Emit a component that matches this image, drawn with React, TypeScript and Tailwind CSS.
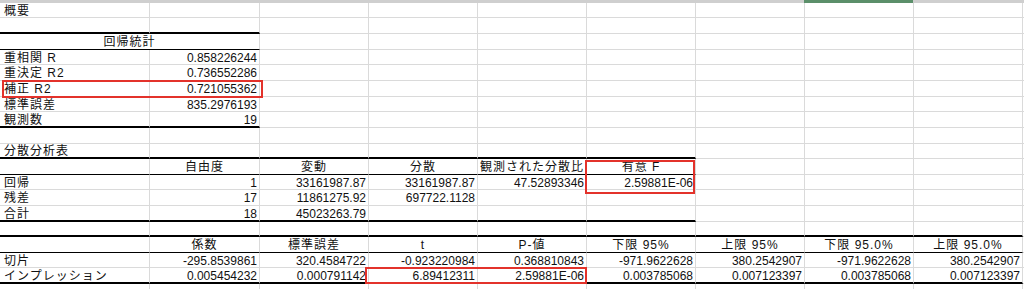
import React from "react";

type Line = "g" | "t" | "T";
type Align = "l" | "r" | "c";

interface RowSpec {
  h: 15 | 16;
  label?: string;
  vals?: string[];
  align?: Align;
  line?: { type: Line; n: number };
  merge2?: string;
}

const FONT = { fontFamily: '"Liberation Sans", "Noto Sans CJK JP", sans-serif' };

const rows: RowSpec[] = [
  { h: 15, label: "概要" },
  { h: 16, line: { type: "T", n: 2 } },
  { h: 16, merge2: "回帰統計", line: { type: "t", n: 2 } },
  { h: 15, label: "重相関 R", vals: ["0.858226244"] },
  { h: 16, label: "重決定 R2", vals: ["0.736552286"] },
  { h: 16, label: "補正 R2", vals: ["0.721055362"] },
  { h: 15, label: "標準誤差", vals: ["835.2976193"] },
  { h: 16, label: "観測数", vals: ["19"], line: { type: "T", n: 2 } },
  { h: 16 },
  { h: 15, label: "分散分析表", line: { type: "T", n: 6 } },
  {
    h: 16,
    vals: ["自由度", "変動", "分散", "観測された分散比", "有意 F"],
    align: "c",
    line: { type: "t", n: 6 },
  },
  { h: 15, label: "回帰", vals: ["1", "33161987.87", "33161987.87", "47.52893346", "2.59881E-06"] },
  { h: 16, label: "残差", vals: ["17", "11861275.92", "697722.1128"] },
  { h: 16, label: "合計", vals: ["18", "45023263.79"], line: { type: "T", n: 6 } },
  { h: 15, line: { type: "T", n: 9 } },
  {
    h: 16,
    vals: ["係数", "標準誤差", "t", "P-値", "下限 95%", "上限 95%", "下限 95.0%", "上限 95.0%"],
    align: "c",
    line: { type: "t", n: 9 },
  },
  {
    h: 15,
    label: "切片",
    vals: [
      "-295.8539861",
      "320.4584722",
      "-0.923220984",
      "0.368810843",
      "-971.9622628",
      "380.2542907",
      "-971.9622628",
      "380.2542907",
    ],
  },
  {
    h: 16,
    label: "インプレッション",
    vals: [
      "0.005454232",
      "0.000791142",
      "6.89412311",
      "2.59881E-06",
      "0.003785068",
      "0.007123397",
      "0.003785068",
      "0.007123397",
    ],
    line: { type: "T", n: 9 },
  },
];

function bottomClass(t: Line) {
  if (t === "T") return "border-b-2 border-b-black";
  if (t === "t") return "border-b border-b-black";
  return "border-b border-b-[#dadada]";
}

function widthClass(i: number) {
  if (i === 0) return "w-[150px]";
  if (i === 1) return "w-[110px]";
  return "w-[109px]";
}

function Cell({
  i,
  text,
  align,
  line,
}: {
  i: number;
  text?: string;
  align: Align;
  line: Line;
}) {
  const al =
    align === "r"
      ? "justify-end pr-[2px]"
      : align === "c"
      ? "justify-center tracking-[1px]"
      : "justify-start pl-[4px] tracking-[1px]";
  return (
    <div
      className={`${widthClass(i)} shrink-0 h-full flex items-center pt-[1px] border-r border-r-[#dadada] ${bottomClass(
        line
      )} ${al} overflow-visible whitespace-nowrap`}
    >
      {text ?? ""}
    </div>
  );
}

function Row({ r }: { r: RowSpec }) {
  const lineFor = (i: number): Line => (r.line && i < r.line.n ? r.line.type : "g");
  const cells: React.ReactNode[] = [];
  if (r.merge2) {
    cells.push(
      <div
        key="m"
        className={`w-[260px] shrink-0 h-full flex items-center justify-center pt-[1px] tracking-[1px] border-r border-r-[#dadada] ${bottomClass(
          lineFor(0)
        )}`}
      >
        {r.merge2}
      </div>
    );
    for (let i = 2; i < 9; i++) cells.push(<Cell key={i} i={i} align="r" line={lineFor(i)} />);
  } else {
    for (let i = 0; i < 9; i++) {
      if (i === 0) {
        cells.push(<Cell key={i} i={0} text={r.label} align="l" line={lineFor(0)} />);
      } else {
        const v = r.vals ? r.vals[i - 1] : undefined;
        cells.push(
          <Cell key={i} i={i} text={v} align={r.align === "c" ? "c" : "r"} line={lineFor(i)} />
        );
      }
    }
  }
  cells.push(<div key="j" className="flex-1 h-full border-b border-b-[#dadada]" />);
  return <div className={`flex ${r.h === 15 ? "h-[15px]" : "h-[16px]"}`}>{cells}</div>;
}

export default function App() {
  return (
    <div
      className="relative w-[1024px] h-[289px] overflow-hidden bg-white text-[12px] leading-[14px] text-[#111]"
      style={FONT}
    >
      <div className="flex h-[3px]">
        <div className="w-[804px] bg-[#cfcfcf]" />
        <div className="w-[109px] bg-[#5b8f6a]" />
        <div className="flex-1 bg-[#cfcfcf]" />
      </div>
      {rows.map((r, idx) => (
        <Row key={idx} r={r} />
      ))}
      <div className="flex h-[5px]">
        <div className="w-[150px] border-r border-r-[#dadada]" />
        <div className="w-[110px] border-r border-r-[#dadada]" />
        <div className="w-[109px] border-r border-r-[#dadada]" />
        <div className="w-[109px] border-r border-r-[#dadada]" />
        <div className="w-[109px] border-r border-r-[#dadada]" />
        <div className="w-[109px] border-r border-r-[#dadada]" />
        <div className="w-[109px] border-r border-r-[#dadada]" />
        <div className="w-[109px] border-r border-r-[#dadada]" />
        <div className="w-[109px] border-r border-r-[#dadada]" />
      </div>

      <div className="absolute left-[2px] top-[80px] w-[261px] h-[18px] border-2 border-[#e3322b]" />
      <div className="absolute left-[585px] top-[160px] w-[110px] h-[34px] border-2 border-[#e3322b]" />
      <div className="absolute left-[365px] top-[267px] w-[222px] h-[17px] border-2 border-[#e3322b]" />
    </div>
  );
}
